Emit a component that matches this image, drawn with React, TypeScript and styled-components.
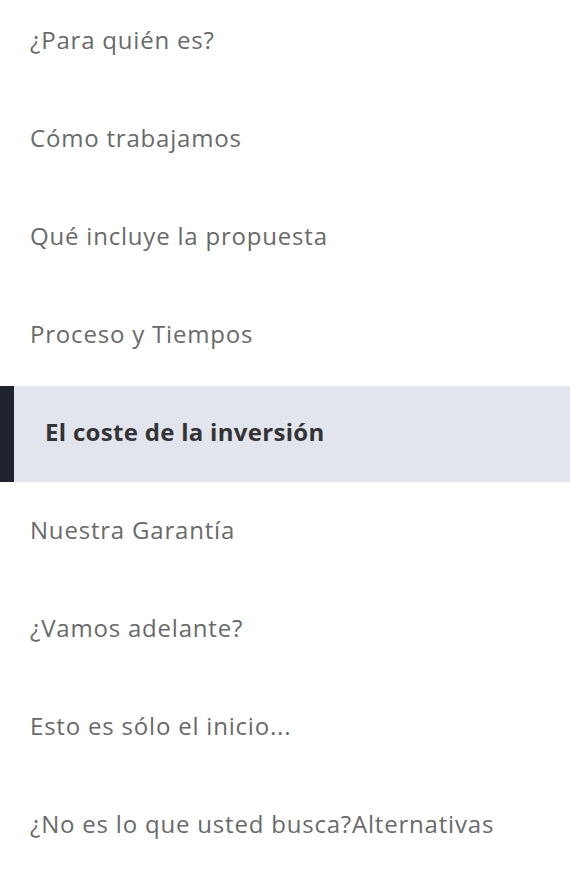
import styled, { createGlobalStyle } from "styled-components";

const items = [
  "¿Para quién es?",
  "Cómo trabajamos",
  "Qué incluye la propuesta",
  "Proceso y Tiempos",
  "El coste de la inversión",
  "Nuestra Garantía",
  "¿Vamos adelante?",
  "Esto es sólo el inicio...",
  "¿No es lo que usted busca?Alternativas",
];

const activeIndex = 4;

export default function App() {
  return (
    <>
      <GlobalStyle />
      <Nav>
        <List>
          {items.map((label, i) => (
            <Item key={label} $active={i === activeIndex}>
              <Link href="#" $active={i === activeIndex}>
                {label}
              </Link>
            </Item>
          ))}
        </List>
      </Nav>
    </>
  );
}

const GlobalStyle = createGlobalStyle`
  html, body {
    margin: 0;
    padding: 0;
    background: #ffffff;
    overflow: hidden;
  }
  body {
    font-family: "Open Sans", Lato, "Liberation Sans", sans-serif;
  }
`;

const Nav = styled.nav`
  width: 570px;
  height: 884px;
  overflow: hidden;
`;

const List = styled.ul`
  list-style: none;
  margin: -6px 0 0;
  padding: 0;
  display: flex;
  flex-direction: column;
  gap: 2px;
`;

const Item = styled.li<{ $active: boolean }>`
  height: 96px;
  display: flex;
  align-items: center;
  background: ${({ $active }) => ($active ? "#e2e5ed" : "transparent")};
  border-left: ${({ $active }) => ($active ? "14px solid #1f232d" : "0")};
`;

const Link = styled.a<{ $active: boolean }>`
  padding-left: ${({ $active }) => ($active ? "31px" : "30px")};
  margin-top: -4px;
  font-size: 24px;
  line-height: 1;
  letter-spacing: ${({ $active }) => ($active ? "0.3px" : "0.8px")};
  font-weight: ${({ $active }) => ($active ? 700 : 400)};
  color: ${({ $active }) => ($active ? "#333333" : "#6a6a6a")};
  text-decoration: none;
  white-space: nowrap;
`;
